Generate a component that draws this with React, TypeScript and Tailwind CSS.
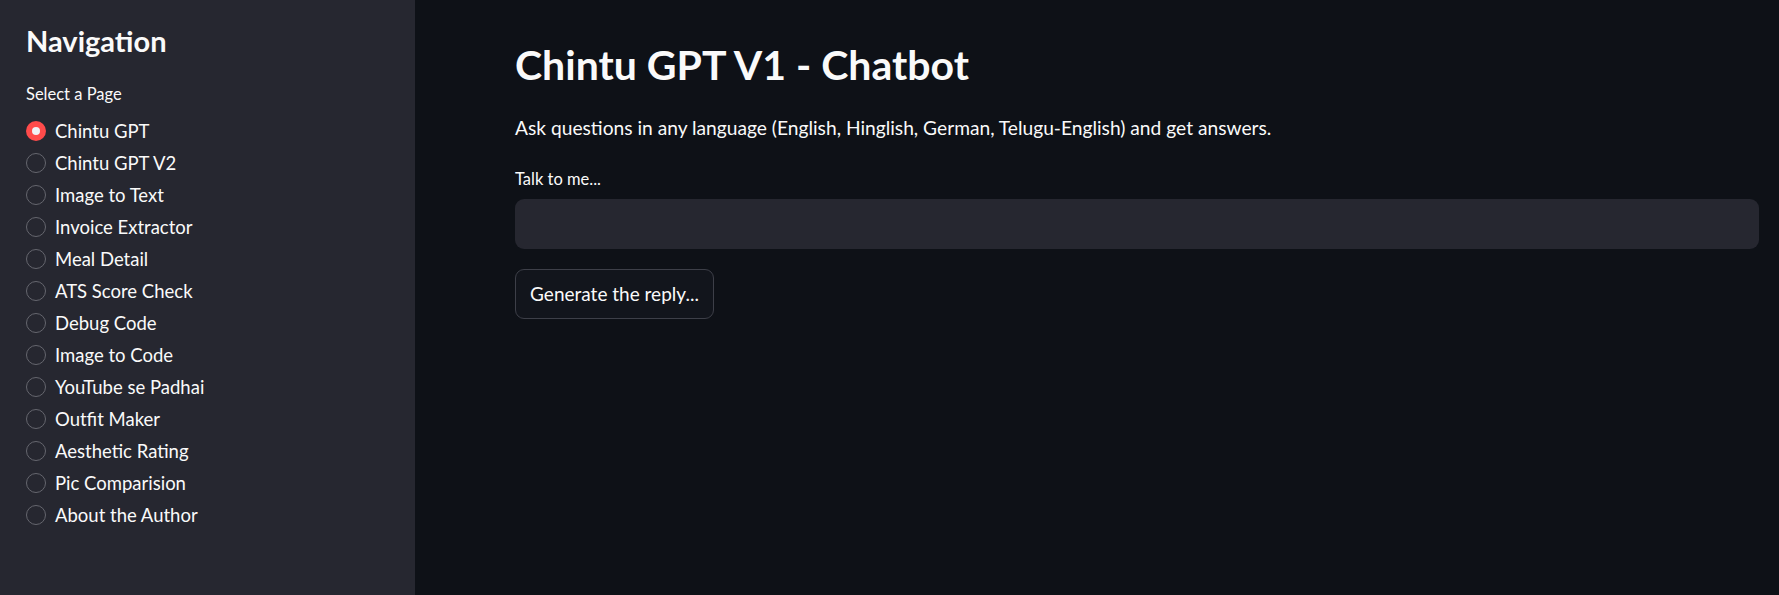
const pages = [
  'Chintu GPT',
  'Chintu GPT V2',
  'Image to Text',
  'Invoice Extractor',
  'Meal Detail',
  'ATS Score Check',
  'Debug Code',
  'Image to Code',
  'YouTube se Padhai',
  'Outfit Maker',
  'Aesthetic Rating',
  'Pic Comparision',
  'About the Author',
];

const font = { fontFamily: '"Source Sans Pro", Lato, sans-serif' };

const App = () => {
  const selected = 'Chintu GPT';

  return (
    <div className="flex h-[595px] w-full bg-[#0e1117] text-[#fafafa] overflow-hidden" style={font}>
      {/* sidebar */}
      <aside className="w-[415px] shrink-0 bg-[#262730] pt-[23px] pl-[26px]">
        <h2 className="text-[29px] leading-[36px] font-bold">Navigation</h2>
        <p className="mt-[25px] text-[16.5px] leading-[20px]">Select a Page</p>
        <div className="mt-[11px] flex flex-col">
          {pages.map((p) => (
            <label key={p} className="flex items-center h-[32px] cursor-pointer">
              {p === selected ? (
                <span className="w-[20px] h-[20px] rounded-full bg-[#ff4b4b] flex items-center justify-center">
                  <span className="w-[8px] h-[8px] rounded-full bg-[#f0f2f6]" />
                </span>
              ) : (
                <span className="w-[20px] h-[20px] rounded-full border border-[#65666e]" />
              )}
              <span className="ml-[9px] text-[18.5px] leading-[24px]">{p}</span>
            </label>
          ))}
        </div>
      </aside>

      {/* main */}
      <main className="flex-1 pt-[41px] pl-[100px] pr-[20px]">
        <h1 className="text-[41px] leading-[48px] font-bold">Chintu GPT V1 - Chatbot</h1>
        <p className="mt-[27px] text-[19.2px] leading-[24px]">
          Ask questions in any language (English, Hinglish, German, Telugu-English) and get answers.
        </p>
        <p className="mt-[29px] text-[16.5px] leading-[20px]">Talk to me...</p>
        <input
          className="mt-[10px] block w-full h-[50px] rounded-[9px] bg-[#262730] px-3 outline-none text-[17px]"
          type="text"
        />
        <button className="mt-[20px] w-[199px] h-[50px] rounded-[9px] border border-[#3d3f48] bg-[#12151c] text-[19px] leading-[24px]">
          Generate the reply...
        </button>
      </main>
    </div>
  );
};

export default App;
